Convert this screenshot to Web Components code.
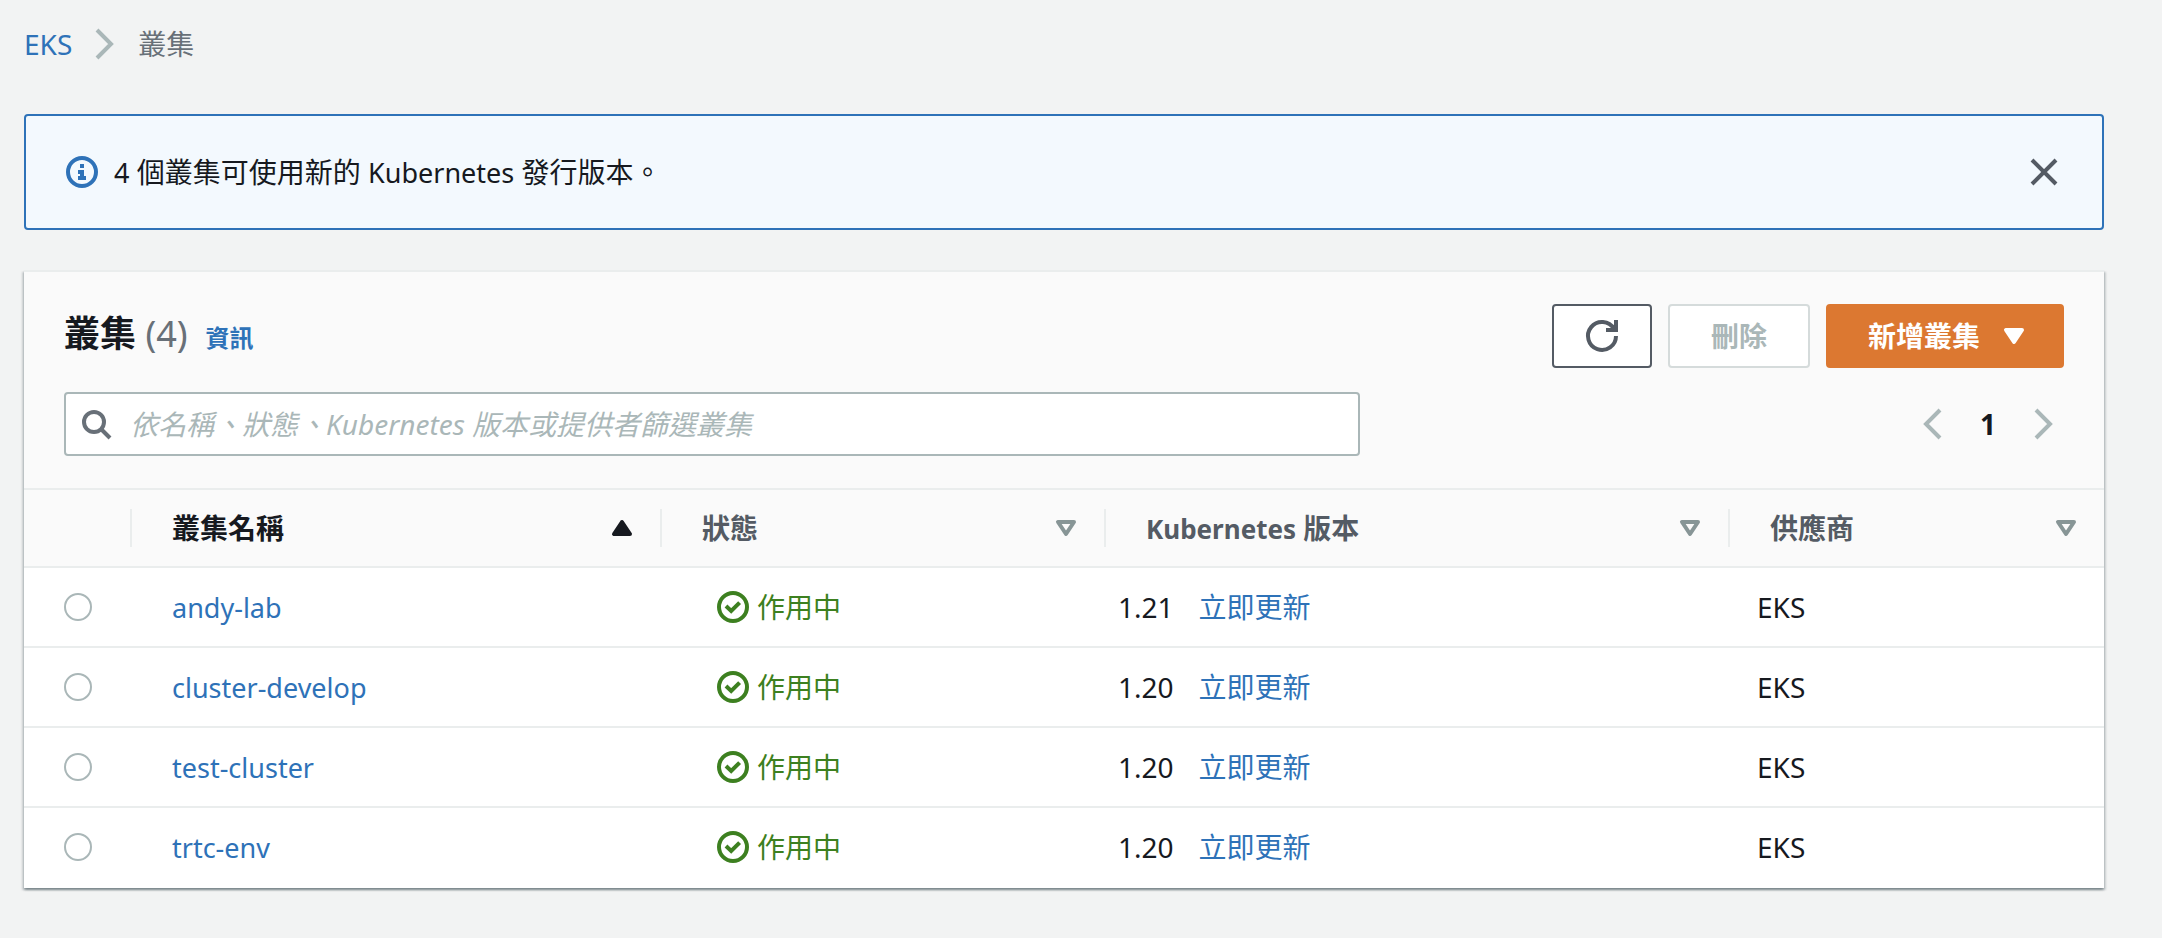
<!DOCTYPE html>
<html lang="zh-Hant">
<head>
<meta charset="utf-8">
<meta name="viewport" content="width=device-width, initial-scale=1">
<title>EKS 叢集</title>
<style>
  :root {
    --text: #16191f;
    --heading: #545b64;
    --muted: #687078;
    --disabled: #aab7b8;
    --link: #2e72b8;
    --line: #eaeded;
    --success: #3d8020;
    --accent: #dc7831;
    --latin-size: 27px;
  }
  body {
    margin: 0;
    padding: 24px 58px 48px 24px;
    background: #f2f3f3;
    color: var(--text);
    font: 28px/40px "Noto Sans", "Noto Sans CJK TC", sans-serif;
  }
</style>
</head>
<body>
<eks-page></eks-page>

<script>
const ICONS = {
  'angle-right': '<path d="m4 1 7 7-7 7"/>',
  'angle-left': '<path d="m12 1-7 7 7 7"/>',
  'close': '<path d="m2 2 12 12M14 2 2 14"/>',
  'info': '<circle cx="8" cy="8" r="7"/><path class="flat" d="M7 4h2v2H7zM6 7h3v3h1v2H6v-2h1V9H6z"/>',
  'success': '<circle cx="8" cy="8" r="7"/><path d="m4.500 7.500 2.600 2.500 4.200-4.200"/>',
  'refresh': '<path d="M10 5h5V0"/><path d="M15 8a7 7 0 1 1-1-3.600"/>',
  'search': '<circle cx="7" cy="7" r="5"/><path d="m10.500 10.500 4.500 4.500"/>',
  'caret-down': '<path class="solid" d="M4 5h8l-4 6z"/>',
  'caret-up': '<path class="solid" d="M4 11h8L8 5z"/>',
  'sort': '<path stroke-linejoin="round" d="M4 5h8l-4 6z"/>'
};

class UiIcon extends HTMLElement {
  connectedCallback() {
    this.attachShadow({ mode: 'open' }).innerHTML = `
      <style>
        :host { display: block; flex: none; width: 32px; height: 32px; }
        svg { display: block; width: 100%; height: 100%; overflow: visible;
              fill: none; stroke: currentColor; stroke-width: 2; }
        .solid { fill: currentColor; stroke-linejoin: round; }
        .flat { fill: currentColor; stroke: none; }
      </style>
      <svg viewBox="0 0 16 16" aria-hidden="true">${ICONS[this.getAttribute('name')]}</svg>`;
  }
}

class UiBreadcrumb extends HTMLElement {
  connectedCallback() {
    this.attachShadow({ mode: 'open' }).innerHTML = `
      <style>
        :host { display: block; }
        nav { display: flex; align-items: center; gap: 17px; }
        a { color: var(--link); text-decoration: none; }
        ui-icon { color: var(--disabled); }
        span { color: var(--muted); }
      </style>
      <nav>
        <a href="#"><slot name="parent"></slot></a>
        <ui-icon name="angle-right"></ui-icon>
        <span aria-current="page"><slot></slot></span>
      </nav>`;
  }
}

class UiAlert extends HTMLElement {
  connectedCallback() {
    this.attachShadow({ mode: 'open' }).innerHTML = `
      <style>
        :host { display: flex; align-items: center; gap: 16px; padding: 36px 42px 36px 40px;
                border: 2px solid var(--link); border-radius: 4px; background: #f3f9fe; }
        ui-icon.lead { color: var(--link); }
        p { margin: 0; flex: 1; }
        button { border: 0; padding: 0; background: none; color: var(--heading); }
      </style>
      <ui-icon class="lead" name="info"></ui-icon>
      <p><slot></slot></p>
      <button type="button" aria-label="關閉"><ui-icon name="close"></ui-icon></button>`;
    this.shadowRoot.querySelector('button').addEventListener('click', () => this.remove());
  }
}

class UiButton extends HTMLElement {
  connectedCallback() {
    const label = this.getAttribute('label');
    const off = this.hasAttribute('disabled') ? ' disabled' : '';
    this.attachShadow({ mode: 'open' }).innerHTML = `
      <style>
        :host { display: block; }
        button { display: flex; align-items: center; gap: 18px; box-sizing: border-box;
                 height: 64px; padding: 0 41px; border: 2px solid var(--heading);
                 border-radius: 4px; background: #fff; color: var(--heading);
                 font: inherit; font-weight: 700; }
        button:disabled { border-color: #d5dbdb; color: var(--disabled); }
        :host([variant=icon]) button { padding: 0 32px; }
        :host([variant=primary]) button { padding: 0 32px 0 40px; border-color: var(--accent);
                 background: var(--accent); color: #fff; }
      </style>
      <button type="button"${off}${label ? ` aria-label="${label}"` : ''}><slot></slot></button>`;
  }
}

class UiSearch extends HTMLElement {
  connectedCallback() {
    this.attachShadow({ mode: 'open' }).innerHTML = `
      <style>
        :host { display: block; }
        label { display: flex; align-items: center; gap: 18px; box-sizing: border-box; height: 64px;
                padding: 0 14px; border: 2px solid var(--disabled); border-radius: 4px; background: #fff; }
        ui-icon { color: var(--muted); }
        input { flex: 1; min-width: 0; height: 40px; padding: 0; border: 0; outline: 0;
                background: none; color: var(--text); font: inherit; }
        input::placeholder { color: var(--disabled); font-style: italic; opacity: 1; }
      </style>
      <label>
        <ui-icon name="search"></ui-icon>
        <input type="text" aria-label="篩選叢集" placeholder="${this.getAttribute('placeholder')}">
      </label>`;
  }
}

class UiPagination extends HTMLElement {
  connectedCallback() {
    this.attachShadow({ mode: 'open' }).innerHTML = `
      <style>
        :host { display: block; }
        nav { display: flex; align-items: center; gap: 32px; padding-right: 4px; }
        button { border: 0; padding: 0; background: none; color: var(--disabled); font: inherit; }
        .page { color: var(--text); font-weight: 700; }
      </style>
      <nav aria-label="分頁">
        <button type="button" disabled aria-label="上一頁"><ui-icon name="angle-left"></ui-icon></button>
        <button type="button" class="page" aria-current="page">1</button>
        <button type="button" disabled aria-label="下一頁"><ui-icon name="angle-right"></ui-icon></button>
      </nav>`;
  }
}

class UiPanel extends HTMLElement {
  connectedCallback() {
    this.attachShadow({ mode: 'open' }).innerHTML = `
      <style>
        :host { display: block; border-top: 2px solid var(--line); background: #fff;
                box-shadow: 0 2px 2px 0 rgba(0, 28, 36, .3), 2px 2px 2px 0 rgba(0, 28, 36, .15),
                            -2px 2px 2px 0 rgba(0, 28, 36, .15); }
        header { display: grid; gap: 24px; padding: 32px 40px; background: #fafafa; }
        .row { display: flex; align-items: center; justify-content: space-between; gap: 40px; }
        .actions { display: flex; gap: 16px; }
        .filter { flex: 0 1 1296px; }
      </style>
      <header>
        <div class="row">
          <slot name="title"></slot>
          <div class="actions"><slot name="actions"></slot></div>
        </div>
        <div class="row">
          <div class="filter"><slot name="filter"></slot></div>
          <slot name="pages"></slot>
        </div>
      </header>
      <slot></slot>`;
  }
}

class UiTitle extends HTMLElement {
  connectedCallback() {
    this.attachShadow({ mode: 'open' }).innerHTML = `
      <style>
        :host { display: flex; align-items: baseline; gap: 18px; padding-bottom: 4px; }
        h2 { margin: 0; font-size: 36px; line-height: 48px; }
        .count { color: var(--muted); font-weight: 400; }
        a { color: var(--link); font-size: 24px; font-weight: 700; text-decoration: none; }
      </style>
      <h2><slot></slot> <span class="count">(${this.getAttribute('count')})</span></h2>
      <a href="#">資訊</a>`;
  }
}

class ClusterTable extends HTMLElement {
  connectedCallback() {
    const clusters = [
      ['andy-lab', '1.21'],
      ['cluster-develop', '1.20'],
      ['test-cluster', '1.20'],
      ['trtc-env', '1.20']
    ];
    const head = (label, icon, sort) => `
      <th scope="col"${sort ? ` aria-sort="${sort}"` : ''}><div>
        <button type="button"><span>${label}</span><ui-icon name="${icon}"></ui-icon></button>
      </div></th>`;
    this.attachShadow({ mode: 'open' }).innerHTML = `
      <style>
        :host { display: block; }
        table { width: 100%; border-collapse: separate; border-spacing: 0; table-layout: fixed; }
        .select { width: 108px; }
        .name { width: 530px; }
        .status { width: 444px; }
        .version { width: 624px; }
        .provider { width: 374px; }
        th { padding: 19px 0; border: solid var(--line); border-width: 2px 0; background: #fafafa;
             color: var(--heading); text-align: left; font-weight: 700; }
        th div { height: 38px; border-right: 2px solid var(--line); }
        th:last-child div { border-right: 0; }
        th[aria-sort] { color: var(--text); }
        th button { display: flex; align-items: center; justify-content: space-between; width: 100%;
                    height: 38px; padding: 0 22px 0 40px; border: 0; background: none;
                    color: inherit; font: inherit; }
        th:not([aria-sort]) ui-icon { color: #879596; }
        th .en { font-size: 26px; }
        td { height: 78px; padding: 0; border-bottom: 2px solid var(--line); }
        tr:last-child td { border-bottom-color: transparent; }
        td:nth-child(1) { padding-left: 40px; }
        td:nth-child(2) { padding-left: 40px; }
        td:nth-child(3) { padding-left: 55px; }
        td:nth-child(4) { padding-left: 12px; }
        td:nth-child(5) { padding-left: 27px; }
        a { color: var(--link); text-decoration: none; }
        td .en { font-size: var(--latin-size); }
        .state { display: flex; align-items: center; gap: 8px; color: var(--success); }
        .update { display: flex; align-items: center; gap: 25px; }
        input { appearance: none; display: block; box-sizing: border-box; width: 28px; height: 28px;
                margin: 0; border: 2px solid var(--disabled); border-radius: 50%; background: #fff; }
        input:checked { border: 8px solid var(--link); }
      </style>
      <table>
        <colgroup>
          <col class="select"><col class="name"><col class="status"><col class="version"><col class="provider">
        </colgroup>
        <thead><tr>
          <th scope="col"><div></div></th>
          ${head('叢集名稱', 'caret-up', 'ascending')}
          ${head('狀態', 'sort')}
          ${head('<span class="en">Kubernetes</span> 版本', 'sort')}
          ${head('供應商', 'sort')}
        </tr></thead>
        <tbody>${clusters.map(([name, version]) => `
          <tr>
            <td><input type="radio" name="cluster" value="${name}" aria-label="${name}"></td>
            <td><a class="en" href="#">${name}</a></td>
            <td><div class="state"><ui-icon name="success"></ui-icon><span>作用中</span></div></td>
            <td><div class="update"><span>${version}</span><a href="#">立即更新</a></div></td>
            <td>EKS</td>
          </tr>`).join('')}
        </tbody>
      </table>`;
  }
}

class EksPage extends HTMLElement {
  connectedCallback() {
    this.attachShadow({ mode: 'open' }).innerHTML = `
      <style>
        :host { display: block; }
        ui-alert { margin: 50px 0 40px; }
        .en { font-size: var(--latin-size); line-height: 1; }
      </style>
      <ui-breadcrumb><span slot="parent">EKS</span>叢集</ui-breadcrumb>
      <main>
        <ui-alert><span class="en">4</span> 個叢集可使用新的 <span class="en">Kubernetes</span> 發行版本。</ui-alert>
        <ui-panel>
          <ui-title slot="title" count="4">叢集</ui-title>
          <ui-button slot="actions" variant="icon" label="重新整理"><ui-icon name="refresh"></ui-icon></ui-button>
          <ui-button slot="actions" disabled>刪除</ui-button>
          <ui-button slot="actions" variant="primary">新增叢集<ui-icon name="caret-down"></ui-icon></ui-button>
          <ui-search slot="filter" placeholder="依名稱、狀態、Kubernetes 版本或提供者篩選叢集"></ui-search>
          <ui-pagination slot="pages"></ui-pagination>
          <cluster-table></cluster-table>
        </ui-panel>
      </main>`;
  }
}

customElements.define('ui-icon', UiIcon);
customElements.define('ui-breadcrumb', UiBreadcrumb);
customElements.define('ui-alert', UiAlert);
customElements.define('ui-button', UiButton);
customElements.define('ui-search', UiSearch);
customElements.define('ui-pagination', UiPagination);
customElements.define('ui-panel', UiPanel);
customElements.define('ui-title', UiTitle);
customElements.define('cluster-table', ClusterTable);
customElements.define('eks-page', EksPage);
</script>
</body>
</html>
